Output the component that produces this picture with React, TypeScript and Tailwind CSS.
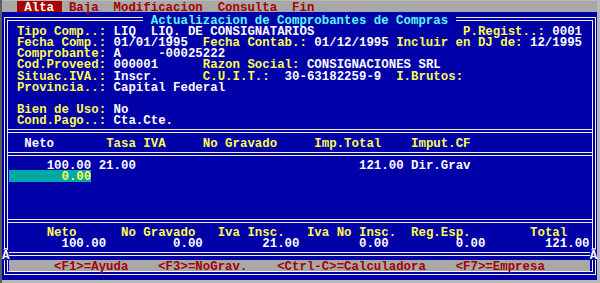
import React from 'react'

// DOS text screen: 80 cols x 25 rows, cell 7.44 x 11.2 px
const Y = 'text-[#fcfc54]'
const W = 'text-[#fcfcfc]'
const R = 'text-[#a80000]'

type Item = [number, string, string, string?]

function Line({ items, base = 1, className = '' }: { items: Item[]; base?: number; className?: string }) {
  let cur = base
  const out: React.ReactNode[] = []
  items.forEach(([col, text, color, bg], i) => {
    if (col > cur) out.push(' '.repeat(col - cur))
    out.push(
      <span key={i} className={`${color} ${bg ? `${bg} inline-block h-[11.2px]` : ''}`}>
        {text}
      </span>
    )
    cur = col + text.length
  })
  return <div className={`h-[11.2px] leading-[14px] whitespace-pre ${className}`}>{out}</div>
}

function Sep({ ends = false }: { ends?: boolean }) {
  return (
    <div className="relative h-[11.2px] -mx-[1.72px] flex items-center">
      <div className="w-full h-[4px] border-y border-[#f0f0f0]" />
      {ends && (
        <>
          <span className="absolute left-[-5.72px] top-0 w-[7.44px] h-[11.2px] leading-[14px] bg-[#0000a8] text-[#fcfcfc]">Â</span>
          <span className="absolute right-[-5.72px] top-0 w-[7.44px] h-[11.2px] leading-[14px] bg-[#0000a8] text-[#fcfcfc]">Â</span>
        </>
      )}
    </div>
  )
}

export default function App() {
  return (
    <div className="w-[600px] h-[283px] overflow-hidden bg-[#b8b8b8] border-l-2 border-[#5c5c5c] font-['Liberation_Mono','DejaVu_Sans_Mono',monospace] text-[12.4px] font-bold">
      <div className="w-[595.2px] mt-[0.5px]">
        <Line
          base={0}
          className="bg-[#a8a8a8]"
          items={[
            [2, ' Alta ', 'text-[#fcfcfc]', 'bg-[#a80000]'],
            [9, 'Baja', R],
            [15, 'Modificacion', R],
            [29, 'Consulta', R],
            [39, 'Fin', R],
          ]}
        />
        <div className="bg-[#0000a8] pt-[5.6px] h-[268.8px]">
          <div className="ml-[1.72px] w-[591.8px] border-[4px] border-double border-[#f0f0f0] px-[1.72px]">
            <div className="-mt-[7.6px]">
              <Line items={[[19, ' Actualizacion de Comprobantes de Compras ', 'text-[#54fcfc]', 'bg-[#0000a8]']]} />
            </div>
            <Line items={[[2, 'Tipo Comp..:', Y], [15, 'LIQ', W], [20, 'LIQ. DE CONSIGNATARIOS', W], [62, 'P.Regist..:', Y], [74, '0001', W]]} />
            <Line items={[[2, 'Fecha Comp.:', Y], [15, '01/01/1995', W], [27, 'Fecha Contab.:', Y], [42, '01/12/1995', W], [53, 'Incluir en DJ de:', Y], [71, '12/1995', W]]} />
            <Line items={[[2, 'Comprobante:', Y], [15, 'A', W], [21, '-00025222', W]]} />
            <Line items={[[2, 'Cod.Proveed:', Y], [15, '000001', W], [27, 'Razon Social:', Y], [41, 'CONSIGNACIONES SRL', W]]} />
            <Line items={[[2, 'Situac.IVA.:', Y], [15, 'Inscr.', W], [27, 'C.U.I.T.:', Y], [38, '30-63182259-9', W], [53, 'I.Brutos:', Y]]} />
            <Line items={[[2, 'Provincia..:', Y], [15, 'Capital Federal', W]]} />
            <Line items={[]} />
            <Line items={[[2, 'Bien de Uso:', Y], [15, 'No', W]]} />
            <Line items={[[2, 'Cond.Pago..:', Y], [15, 'Cta.Cte.', W]]} />
            <Sep />
            <Line items={[[3, 'Neto', W], [14, 'Tasa IVA', Y], [27, 'No Gravado', Y], [42, 'Imp.Total', Y], [55, 'Imput.CF', Y]]} />
            <Sep />
            <Line items={[[6, '100.00', W], [13, '21.00', W], [48, '121.00', W], [55, 'Dir.Grav', W]]} />
            <Line items={[[1, '       0.00', Y, 'bg-[#00a8a8]']]} />
            <Line items={[]} />
            <Line items={[]} />
            <Line items={[]} />
            <Sep />
            <Line items={[[6, 'Neto', Y], [16, 'No Gravado', Y], [29, 'Iva Insc.', Y], [41, 'Iva No Insc.', Y], [55, 'Reg.Esp.', Y], [71, 'Total', Y]]} />
            <Line items={[[8, '100.00', W], [23, '0.00', W], [35, '21.00', W], [48, '0.00', W], [61, '0.00', W], [73, '121.00', W]]} />
            <Sep ends />
            <Line
              className="bg-[#a8a8a8]"
              items={[[7, '<F1>=Ayuda', R], [21, '<F3>=NoGrav.', R], [37, '<Ctrl-C>=Calculadora', R], [61, '<F7>=Empresa', R]]}
            />
          </div>
        </div>
      </div>
    </div>
  )
}
